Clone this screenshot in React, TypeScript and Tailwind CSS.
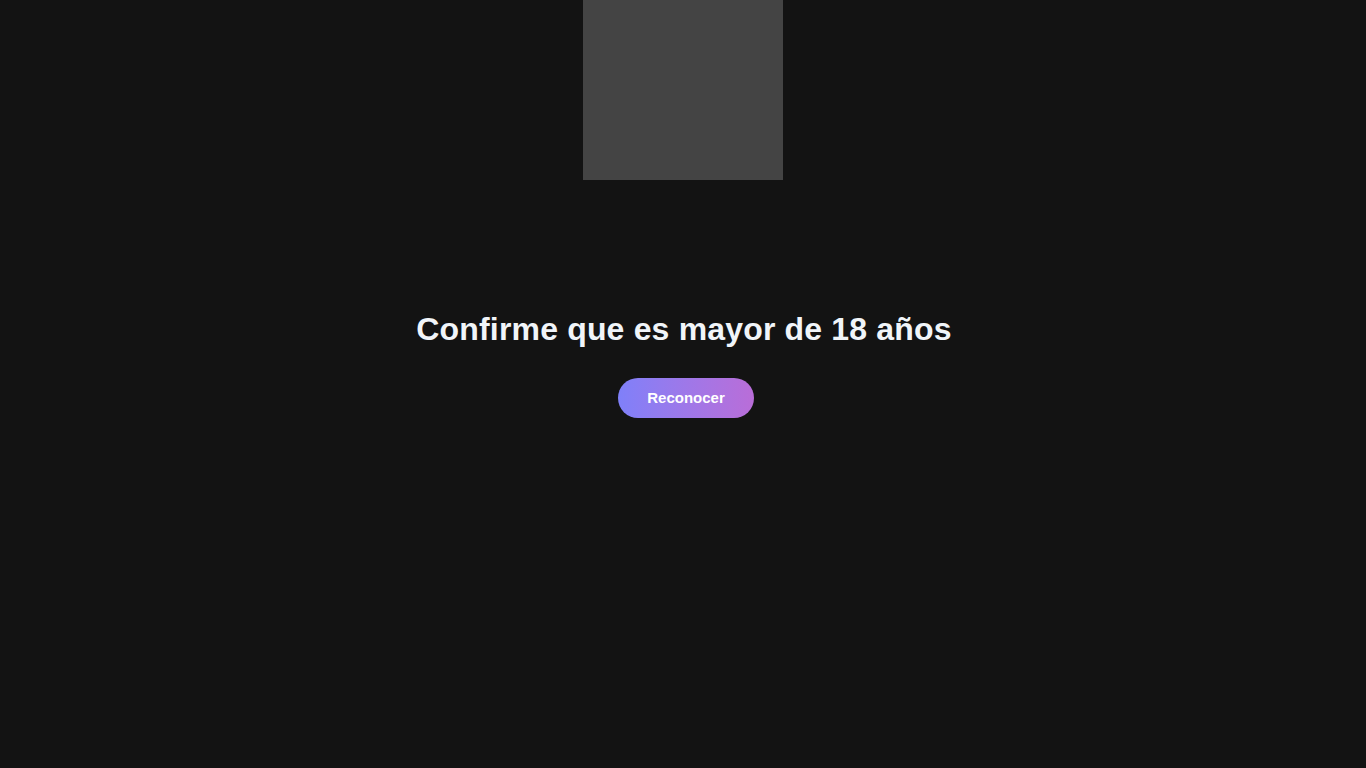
export default function App() {
    return (
        <div className="min-h-screen w-full bg-[#131313] flex flex-col items-center font-['Liberation_Sans',Arial,sans-serif]">
            <div className="h-[180px] w-[200px] bg-[#444444]" />
            <h1 className="mt-[131px] ml-[2px] text-[32px] leading-[37px] font-bold tracking-[0.17px] text-[#f1f5f9]">
                Confirme que es mayor de 18 años
            </h1>
            <button className="mt-[30px] ml-[6px] h-10 w-[136px] rounded-full bg-gradient-to-r from-[#7f80f9] to-[#b96dd8] text-[15px] font-bold text-white">
                Reconocer
            </button>
        </div>
    )
}
